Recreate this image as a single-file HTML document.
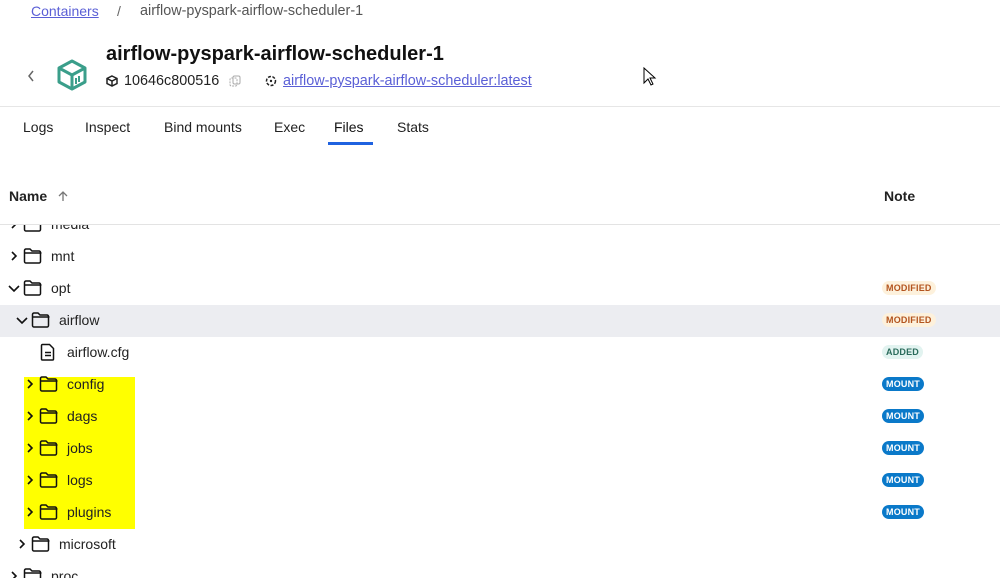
<!DOCTYPE html><html><head><style>
body{margin:0;width:1000px;height:578px;overflow:hidden;background:#fff;font-family:"Liberation Sans",sans-serif;position:relative;color:#000}
.a{position:absolute;white-space:nowrap}
.row{position:absolute;left:0;width:1000px;height:32px}
.row .t{position:absolute;top:8px;font-size:14px;color:#222}
.row svg{position:absolute}
.b{position:absolute;left:882px;top:9px;font-size:9px;font-weight:bold;padding:2px 4px;border-radius:8px;letter-spacing:.2px}
.mod{background:#fdf1dc;color:#b3541e}.add{background:#e2f3f0;color:#2a6b5b}.mnt{background:#0a79c9;color:#fff}
</style></head><body>
<div class="a" style="left:31px;top:3px;font-size:14px;color:#5a5fd6;text-decoration:underline">Containers</div>
<div class="a" style="left:117px;top:3px;font-size:14px;color:#666">/</div>
<div class="a" style="left:140px;top:3px;font-size:14.4px;color:#555">airflow-pyspark-airflow-scheduler-1</div>
<svg class="a" style="left:26px;top:69px" width="10" height="14"><path d="M7 2L3 7L7 12" stroke="#666" stroke-width="1.5" fill="none"/></svg>
<svg class="a" style="left:55px;top:58px" width="34" height="34" viewBox="0 0 34 34"><path d="M17 3L30 10V24L17 31L4 24V10Z M4 10L17 17L30 10 M17 17V31" stroke="#3a9e8a" stroke-width="3" fill="none" stroke-linejoin="round"/><path d="M21 20v6 M24 18v6" stroke="#3a9e8a" stroke-width="2"/></svg>
<div class="a" style="left:106px;top:43px;font-size:20px;font-weight:bold;color:#111">airflow-pyspark-airflow-scheduler-1</div>
<svg class="a" style="left:106px;top:75px" width="12" height="12" viewBox="0 0 12 12"><path d="M6 1L11 3.5V8.5L6 11L1 8.5V3.5Z M1 3.5L6 6L11 3.5M6 6V11" stroke="#222" stroke-width="1.5" fill="none"/></svg>
<div class="a" style="left:124px;top:73px;font-size:14.4px;color:#222">10646c800516</div>
<svg class="a" style="left:229px;top:75px" width="12" height="13"><rect x="1" y="3" width="7" height="8" rx="1.5" stroke="#aaa" stroke-dasharray="2 1" fill="none"/><rect x="4" y="1" width="7" height="8" rx="1.5" stroke="#aaa" fill="none"/></svg>
<svg class="a" style="left:265px;top:75px" width="12" height="12"><circle cx="6" cy="6" r="4.5" stroke="#222" stroke-width="1.5" stroke-dasharray="3 1.5" fill="none"/><circle cx="6" cy="6" r="1.2" fill="#222"/></svg>
<div class="a" style="left:283px;top:73px;font-size:14.4px;color:#5a5fd6;text-decoration:underline">airflow-pyspark-airflow-scheduler:latest</div>
<svg class="a" style="left:643px;top:67px" width="14" height="20"><path d="M1 1V16L5 12L8 18L10 17L7 11H12Z" fill="#fff" stroke="#000"/></svg>
<div class="a" style="left:0;top:106px;width:1000px;height:1px;background:#e6e6e6"></div>
<div class="a" style="left:23px;top:119px;font-size:14px;color:#222">Logs</div>
<div class="a" style="left:85px;top:119px;font-size:14px;color:#222">Inspect</div>
<div class="a" style="left:164px;top:119px;font-size:14px;color:#222">Bind mounts</div>
<div class="a" style="left:274px;top:119px;font-size:14px;color:#222">Exec</div>
<div class="a" style="left:334px;top:119px;font-size:14px;color:#111;font-weight:500">Files</div>
<div class="a" style="left:397px;top:119px;font-size:14px;color:#222">Stats</div>
<div class="a" style="left:328px;top:142px;width:45px;height:3px;background:#1f62e0"></div>
<div class="a" style="left:9px;top:188px;font-size:14px;font-weight:bold;color:#222">Name</div>
<svg class="a" style="left:57px;top:190px" width="12" height="12"><path d="M6 11V2M2 6L6 2L10 6" stroke="#777" stroke-width="1.3" fill="none"/></svg>
<div class="a" style="left:884px;top:188px;font-size:14px;font-weight:bold;color:#222">Note</div>
<div class="a" style="left:0;top:224px;width:1000px;height:1px;background:#e3e3e3"></div>
<div class="a" style="left:0;top:225px;width:1000px;height:353px;overflow:hidden">
<div style="position:absolute;left:0;top:-17px;width:1000px">
<div class="a" style="left:24px;top:169px;width:111px;height:152px;background:#ffff00"></div>
<div class="a" style="left:0;top:97px;width:1000px;height:32px;background:#ecedf1"></div>
</div></div>
<div class="a" style="left:0;top:225px;width:1000px;height:353px;overflow:hidden">
<div id="rows" style="position:absolute;left:0;top:-17px;width:1000px"></div></div>
<script>
var F='<path d="M1.5 4.5a1.5 1.5 0 0 1 1.5-1.5h4l2 2h7a1.5 1.5 0 0 1 1.5 1.5v9a1.5 1.5 0 0 1-1.5 1.5H3a1.5 1.5 0 0 1-1.5-1.5Z M1.5 7h17" stroke="#111" stroke-width="1.5" fill="none"/>';
var R=[[0,'c','media'],[0,'c','mnt'],[0,'o','opt','mod','MODIFIED'],[1,'o','airflow','mod','MODIFIED'],[2,'f','airflow.cfg','add','ADDED'],[2,'c','config','mnt','MOUNT'],[2,'c','dags','mnt','MOUNT'],[2,'c','jobs','mnt','MOUNT'],[2,'c','logs','mnt','MOUNT'],[2,'c','plugins','mnt','MOUNT'],[1,'c','microsoft'],[0,'c','proc']];
var h='';R.forEach(function(r,i){var x=r[0]*8;h+='<div class="row" style="top:'+(i*32)+'px">';
if(r[1]=='c')h+='<svg style="left:'+(x+9)+'px;top:11px" width="10" height="10"><path d="M3 1L7 5L3 9" stroke="#111" stroke-width="1.6" fill="none"/></svg>';
if(r[1]=='o')h+='<svg style="left:'+(x+8)+'px;top:12px" width="12" height="10"><path d="M1 2L6 7L11 2" stroke="#111" stroke-width="1.6" fill="none"/></svg>';
if(r[1]=='f')h+='<svg style="left:'+(x+24)+'px;top:7px" width="16" height="18"><path d="M2.5 1.5h7l4 4v10.5a1 1 0 0 1-1 1h-10a1 1 0 0 1-1-1v-13.5a1 1 0 0 1 1-1Z M5 9.5h6M5 12.5h6" stroke="#111" stroke-width="1.5" fill="none"/></svg>';
else h+='<svg style="left:'+(x+23)+'px;top:6px" width="20" height="20">'+F+'</svg>';
h+='<div class="t" style="left:'+(x+51)+'px">'+r[2]+'</div>';
if(r[3])h+='<span class="b '+r[3]+'">'+r[4]+'</span>';h+='</div>';});
document.getElementById('rows').innerHTML=h;
</script>
</body></html>
